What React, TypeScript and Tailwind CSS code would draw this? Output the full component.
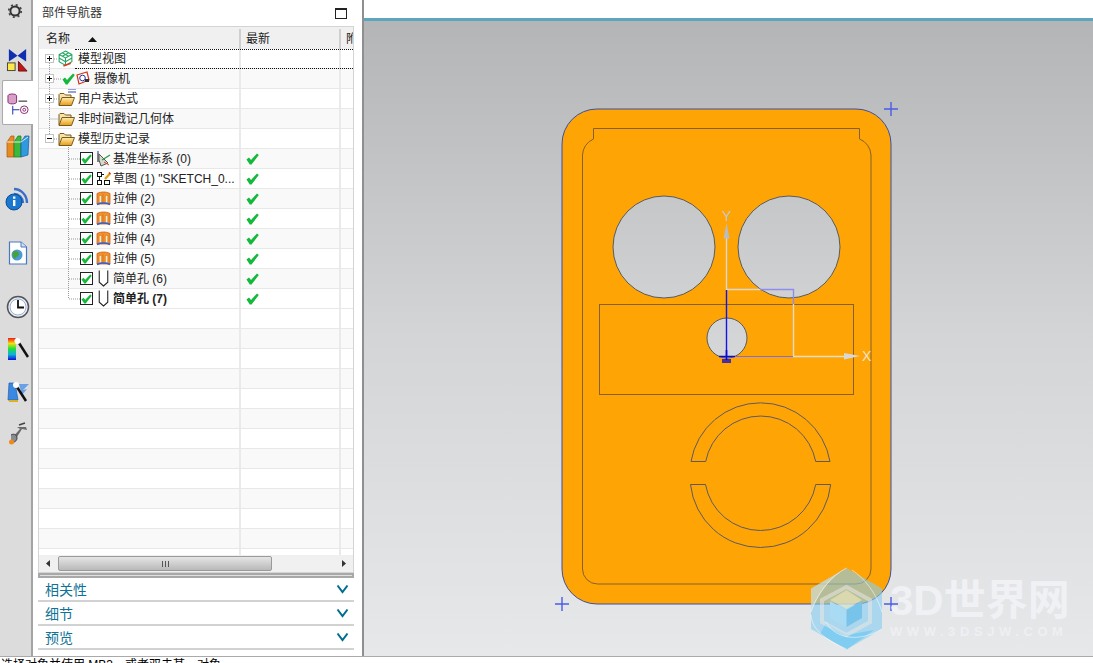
import React from "react";

const FONT = "font-['Liberation_Sans','Noto_Sans_CJK_SC',sans-serif]";

function Check({ className = "" }: { className?: string }) {
  return (
    <svg width="13" height="12" viewBox="0 0 13 12" className={className}>
      <path d="M0.5 6.5L3 4.5L5 7L11 0.5L12.8 2L5.5 11.5H3.8Z" fill="#14b83a" />
    </svg>
  );
}

function BoxCheck() {
  return (
    <svg width="11" height="10" viewBox="0 0 13 12">
      <path d="M0.5 6.5L3 4.5L5 7L11 0.5L12.8 2L5.5 11.5H3.8Z" fill="#14b83a" />
    </svg>
  );
}

function CheckBox() {
  return (
    <span className="relative flex h-[13px] w-[13px] shrink-0 items-center justify-center border border-[#222] bg-white">
      <BoxCheck />
    </span>
  );
}

function PlusBox({ minus = false }: { minus?: boolean }) {
  return (
    <span className="relative z-10 flex h-[9px] w-[9px] shrink-0 items-center justify-center border border-[#c4c4c4] bg-white">
      <svg width="7" height="7" viewBox="0 0 7 7">
        <path d={minus ? "M1 3.5H6" : "M1 3.5H6M3.5 1V6"} stroke="#111" strokeWidth="1" />
      </svg>
    </span>
  );
}

function Folder() {
  return (
    <svg width="18" height="16" viewBox="0 0 18 16" className="shrink-0">
      <defs>
        <linearGradient id="fo" x1="0" y1="0" x2="0" y2="1">
          <stop offset="0" stopColor="#ffeeb0" />
          <stop offset="1" stopColor="#e89a10" />
        </linearGradient>
      </defs>
      <path d="M1 14V3.5L2 2.5H6L7.5 4H13V6.5" fill="#f6e3a8" stroke="#7a5a20" strokeWidth="1" />
      <path d="M1 14.5L4 6.5H16.5L13.5 14.5Z" fill="url(#fo)" stroke="#7a5a20" strokeWidth="1" />
    </svg>
  );
}

function ExpressionFolder() {
  return (
    <span className="relative flex shrink-0">
      <Folder />
      <svg width="8" height="6" viewBox="0 0 8 6" className="absolute right-[0px] top-[-3px]">
        <path d="M0 1H8M0 4H8" stroke="#3340b0" strokeWidth="1" />
      </svg>
    </span>
  );
}

function ModelView() {
  return (
    <svg width="17" height="17" viewBox="0 0 16 16" className="shrink-0">
      <path d="M8 1L14 4.2V11L8 14.5L2 11V4.2Z M2 4.2L8 7.5L14 4.2 M8 7.5V14.5 M5 2.6L11 5.8 M11 2.6L5 5.8 M2 7.6L8 11 M14 7.6L8 11" fill="none" stroke="#23a662" strokeWidth="1" />
      <path d="M6 15L13 12.5" stroke="#e83a1a" strokeWidth="1.4" />
    </svg>
  );
}

function Camera() {
  return (
    <svg width="15" height="15" viewBox="0 0 15 15" className="shrink-0">
      <path d="M1 4L11 1L13 9L3 13Z" fill="#fff" stroke="#d8301c" strokeWidth="1.2" />
      <circle cx="6.5" cy="7" r="2.8" fill="none" stroke="#2030a0" strokeWidth="1" />
      <path d="M9 8H13V11H9Z" fill="#333" />
    </svg>
  );
}

function Csys() {
  return (
    <svg width="16" height="16" viewBox="0 0 16 16" className="shrink-0">
      <path d="M2 2V11" stroke="#333" strokeWidth="1.2" />
      <path d="M1 1H3" stroke="#2030c0" strokeWidth="1.2" />
      <path d="M3 3L12 12L5 15L3 9Z" fill="#d8d8d0" stroke="#555" strokeWidth="1" />
      <path d="M6 9L14 4" stroke="#2a9a3a" strokeWidth="1.2" />
      <path d="M8 11L13 14" stroke="#c84a30" strokeWidth="1" />
    </svg>
  );
}

function Sketch() {
  return (
    <svg width="15" height="15" viewBox="0 0 15 15" className="shrink-0">
      <rect x="1.5" y="1.5" width="4" height="4" fill="#fff" stroke="#111" />
      <rect x="1.5" y="9.5" width="4" height="4" fill="#fff" stroke="#111" />
      <rect x="8.5" y="9.5" width="5" height="4" fill="#fff" stroke="#111" />
      <path d="M5.5 3.5H8M3.5 5.5V9.5" stroke="#111" />
      <path d="M9 8L14 2.5" stroke="#e0a010" strokeWidth="2.2" />
      <path d="M13 1.5L14.5 3" stroke="#d03020" strokeWidth="1.5" />
    </svg>
  );
}

function Extrude() {
  return (
    <svg width="15" height="15" viewBox="0 0 15 15" className="shrink-0">
      <path d="M1 2.5C5 0.5 10 0.5 14 2.5V13H1Z" fill="#f2902a" stroke="#d0601a" strokeWidth="0.8" />
      <path d="M3.2 4.5H5.6V12H3.2ZM9.4 4.5H11.8V12H9.4Z" fill="#ffeec4" stroke="#c8661a" strokeWidth="0.5" />
      <path d="M7 3V12" stroke="#d97a20" strokeWidth="1" />
      <path d="M1 13.5C5 11.8 10 11.8 14 13.5" fill="none" stroke="#2f60d8" strokeWidth="1.5" />
    </svg>
  );
}

function Hole() {
  return (
    <svg width="13" height="17" viewBox="0 0 12 16" className="shrink-0">
      <path d="M2 0.5V11.5L6 15L10 11.5V0.5" fill="#fff" stroke="#222" strokeWidth="1" />
    </svg>
  );
}

function Row({ alt, children, check }: { alt: boolean; children?: React.ReactNode; check?: boolean }) {
  return (
    <div className={`flex h-5 shrink-0 border-b border-[#e8e8e8] ${alt ? "bg-[#f9f9f9]" : "bg-white"}`}>
      <div className="flex w-[200px] shrink-0 items-center overflow-hidden whitespace-nowrap">{children}</div>
      <div className="flex w-[100px] shrink-0 items-center border-l-2 border-[#eaeaea] pl-[5px]">
        {check ? <Check /> : null}
      </div>
      <div className="flex-1 border-l-2 border-[#eaeaea]" />
    </div>
  );
}

const children = [
  { icon: <Csys />, label: "基准坐标系 (0)" },
  { icon: <Sketch />, label: '草图 (1) "SKETCH_0...' },
  { icon: <Extrude />, label: "拉伸 (2)" },
  { icon: <Extrude />, label: "拉伸 (3)" },
  { icon: <Extrude />, label: "拉伸 (4)" },
  { icon: <Extrude />, label: "拉伸 (5)" },
  { icon: <Hole />, label: "简单孔 (6)" },
  { icon: <Hole />, label: "简单孔 (7)", bold: true },
];

function TreeLines() {
  const dot = { stroke: "#999", strokeWidth: 1, strokeDasharray: "1 1" };
  return (
    <svg width="120" height="270" viewBox="0 0 120 270" className="pointer-events-none absolute left-0 top-0 z-[5]">
      <path d="M10.5 10V90" {...dot} />
      <path d="M15 10H19M15 30H23M15 50H20M10.5 70H20M15 90H20" {...dot} />
      <path d="M29.5 98V250" {...dot} />
      <path d="M30 110H41M30 130H41M30 150H41M30 170H41M30 190H41M30 210H41M30 230H41M30 250H41" {...dot} />
    </svg>
  );
}

function Chevron() {
  return (
    <svg width="13" height="10" viewBox="0 0 13 10">
      <path d="M1.5 1.5L6.5 8L11.5 1.5" fill="none" stroke="#006c8f" strokeWidth="2" />
    </svg>
  );
}

function Section({ label }: { label: string }) {
  return (
    <div className="flex h-[24px] items-center justify-between border-b-2 border-[#d2d2d2] pl-[7px] pr-[5px]">
      <span className="mt-[2px] text-[14px] leading-none text-[#0f7396]">{label}</span>
      <span className="mb-[1px]"><Chevron /></span>
    </div>
  );
}

function Toolbar() {
  return (
    <div className="flex w-[33px] shrink-0 flex-col items-start border-r-2 border-[#a4a4a4] bg-[#dcdcdc]">
      <div className="flex h-[22px] w-[30px] items-center justify-center">
        <svg width="16" height="16" viewBox="0 0 16 16">
          <circle cx="8" cy="8" r="4.6" fill="none" stroke="#333" strokeWidth="2" />
          <circle cx="8" cy="8" r="6.2" fill="none" stroke="#444" strokeWidth="1.8" strokeDasharray="2 2.87" />
        </svg>
      </div>
      <div className="flex h-[58px] w-[35px] items-center justify-center pt-[19px]">
        <svg width="23" height="25" viewBox="0 0 24 26">
          <path d="M3 1L12 8L21 1V14L12 8L3 14Z" fill="#0f2fb0" />
          <rect x="1.5" y="15.5" width="8" height="8" fill="#ffe84a" stroke="#443" />
          <path d="M13 14V24H22Z" fill="#c81414" stroke="#611" />
        </svg>
      </div>
      <div className="ml-[2px] mr-[-2px] flex h-[45px] w-[31px] items-center justify-center rounded-l-[2px] border-y border-l border-[#aaa] bg-white pt-[2px]">
        <svg width="23" height="24" viewBox="0 0 24 24">
          <ellipse cx="5.5" cy="3.5" rx="4.5" ry="2" fill="#d8a0c8" stroke="#8a2a70" />
          <path d="M1 3.5V10C1 12.5 10 12.5 10 10V3.5" fill="#d8a0c8" stroke="#8a2a70" />
          <path d="M12 9H21" stroke="#111" />
          <path d="M6 14V23M6 18H13" stroke="#1a2ab0" />
          <circle cx="18" cy="18" r="4" fill="none" stroke="#8a2a70" />
          <circle cx="18" cy="18" r="1.5" fill="none" stroke="#8a2a70" />
        </svg>
      </div>
      <div className="flex h-[42px] w-[35px] items-center justify-center">
        <svg width="24" height="24" viewBox="0 0 24 24">
          <path d="M1 8L5 2H8V23H1Z" fill="#e88a20" stroke="#a05a10" strokeWidth="0.7" />
          <path d="M8 8L12 2H15V23H8Z" fill="#3cb83c" stroke="#1a7a1a" strokeWidth="0.7" />
          <path d="M15 8L19 2H23L22 21L15 23Z" fill="#2f9ae0" stroke="#1a5a9a" strokeWidth="0.7" />
          <path d="M1 8H8M8 8H15M15 8L22 3" stroke="#fff" strokeWidth="0.8" />
        </svg>
      </div>
      <div className="flex h-[62px] w-[35px] items-center justify-center">
        <svg width="25" height="25" viewBox="0 0 25 25">
          <path d="M9 3C16 3 22 9 22 17M9 8C14 8 18 12 18 17" fill="none" stroke="#3a70c8" strokeWidth="2.4" />
          <circle cx="9" cy="16" r="8" fill="#1a78d0" stroke="#0d4a90" />
          <rect x="8" y="14" width="2.4" height="6" fill="#fff" />
          <rect x="8" y="10.5" width="2.4" height="2.2" fill="#fff" />
        </svg>
      </div>
      <div className="flex h-[46px] w-[35px] items-center justify-center pt-[2px]">
        <svg width="20" height="24" viewBox="0 0 20 24">
          <path d="M1.5 1H13L18.5 6V23H1.5Z" fill="#fff" stroke="#4a78c0" strokeWidth="1.2" />
          <path d="M13 1V6H18.5" fill="#cfe0f5" stroke="#4a78c0" />
          <circle cx="9" cy="14" r="5.5" fill="#4a9ad8" />
          <path d="M5 11C7 9 11 10 11 13C11 16 8 15 7 18C5 17 4 14 5 11Z" fill="#48a038" />
        </svg>
      </div>
      <div className="flex h-[60px] w-[35px] items-center justify-center pt-[3px]">
        <svg width="24" height="24" viewBox="0 0 24 24">
          <circle cx="12" cy="12" r="10.5" fill="#e8eef8" stroke="#555" strokeWidth="1.5" />
          <circle cx="12" cy="12" r="8" fill="#fff" stroke="#99b0d8" />
          <path d="M12 5V12.5H18" fill="none" stroke="#111" strokeWidth="1.8" />
        </svg>
      </div>
      <div className="flex h-[27px] w-[31px] items-center justify-center pl-[5px]">
        <svg width="21" height="24" viewBox="0 0 21 24">
          <defs>
            <linearGradient id="rb" x1="0" y1="0" x2="0" y2="1">
              <stop offset="0" stopColor="#f01818" />
              <stop offset="0.25" stopColor="#f0e010" />
              <stop offset="0.5" stopColor="#18e040" />
              <stop offset="0.75" stopColor="#10b0e0" />
              <stop offset="1" stopColor="#1010d0" />
            </linearGradient>
          </defs>
          <rect x="0" y="1" width="8" height="22" fill="url(#rb)" />
          <path d="M11 6L20 20" stroke="#111" strokeWidth="2.5" />
          <circle cx="9.5" cy="4" r="3" fill="#fff" />
        </svg>
      </div>
      <div className="flex h-[59px] w-[31px] items-center justify-center pl-[5px]">
        <svg width="24" height="24" viewBox="0 0 24 24">
          <path d="M3 3H9L12 20H2Z" fill="#3a88e0" stroke="#2060b0" strokeWidth="0.7" />
          <path d="M13 4H23L17 10L21 9L16 15Z" fill="#6aa0e8" />
          <path d="M3 21H12" stroke="#e0b020" strokeWidth="2" />
          <path d="M11 7L20 21" stroke="#111" strokeWidth="2.5" />
          <circle cx="10" cy="5" r="3" fill="#fff" />
        </svg>
      </div>
      <div className="flex h-[24px] w-[31px] items-center justify-center pl-[4px]">
        <svg width="20" height="23" viewBox="0 0 20 23">
          <path d="M9 5H18L19 8L14 7L7 18L4 16L12 7Z" fill="#6a6a6a" />
          <path d="M3 13C6 11 9 13 9 16C9 19 6 21 3 20" fill="#8a8a92" stroke="#444" />
          <circle cx="3.5" cy="20" r="2.5" fill="#f08a18" />
          <path d="M11 3L17 1" stroke="#444" strokeWidth="1.5" />
        </svg>
      </div>
    </div>
  );
}

function Navigator() {
  return (
    <div className="flex w-[331px] shrink-0 flex-col border-r-2 border-[#8f8f8f] bg-white pl-[5px] pr-[8px]">
      <div className="flex h-[26px] shrink-0 items-center justify-between pl-[4px] pr-[7px]">
        <span className="text-[12px] leading-none text-[#333]">部件导航器</span>
        <span className="block h-[11px] w-[12px] border border-t-2 border-[#222]" />
      </div>
      <div className="flex h-[547px] shrink-0 flex-col overflow-hidden border border-[#d4d4d4]">
        <div className="flex h-[22px] shrink-0 bg-[#f0f0f0] pt-[2px] text-[12px] text-[#222]">
          <div className="flex w-[200px] shrink-0 items-center pl-[7px]">
            <span>名称</span>
            <svg width="9" height="5" viewBox="0 0 9 5" className="ml-[18px]"><path d="M0 5L4.5 0L9 5Z" fill="#111" /></svg>
          </div>
          <div className="flex w-[100px] shrink-0 items-center border-l-2 border-[#cfcfcf] pl-[5px]">最新</div>
          <div className="flex flex-1 items-center overflow-hidden whitespace-nowrap border-l-2 border-[#cfcfcf] pl-[5px]">附</div>
        </div>
        <div className="relative h-[506px] shrink-0 overflow-hidden text-[12px] text-[#222]">
          <TreeLines />
          <Row alt={false}>
            <span className="ml-[6px]"><PlusBox /></span>
            <span className="ml-[3px]"><ModelView /></span>
            <span className="relative z-10 ml-[4px]">模型视图</span>
          </Row>
          <Row alt>
            <span className="ml-[6px]"><PlusBox /></span>
            <span className="ml-[8px]"><Check /></span>
            <span className="ml-[1px]"><Camera /></span>
            <span className="ml-[3px]">摄像机</span>
          </Row>
          <Row alt={false}>
            <span className="ml-[6px]"><PlusBox /></span>
            <span className="ml-[4px]"><ExpressionFolder /></span>
            <span className="ml-[2px]">用户表达式</span>
          </Row>
          <Row alt>
            <span className="ml-[19px]"><Folder /></span>
            <span className="ml-[2px]">非时间戳记几何体</span>
          </Row>
          <Row alt={false}>
            <span className="ml-[6px]"><PlusBox minus /></span>
            <span className="ml-[4px]"><Folder /></span>
            <span className="ml-[2px]">模型历史记录</span>
          </Row>
          {children.map((c, i) => (
            <Row key={i} alt={i % 2 === 0} check>
              <span className="ml-[41px]"><CheckBox /></span>
              <span className="ml-[2px] flex w-[17px] justify-center">{c.icon}</span>
              <span className={`ml-[1px] ${c.bold ? "font-bold" : ""}`}>{c.label}</span>
            </Row>
          ))}
          {Array.from({ length: 13 }).map((_, i) => (
            <Row key={i} alt={i % 2 === 1} />
          ))}
          <div className="pointer-events-none absolute left-[36px] right-0 top-0 h-[20px] border-y border-dotted border-[#111]" />
        </div>
        <div className="flex h-[17px] shrink-0 items-center bg-[#f0f0f0]">
          <svg width="19" height="15" viewBox="0 0 19 15" className="shrink-0"><path d="M11 4V11L7 7.5Z" fill="#333" /></svg>
          <div className="flex h-[15px] w-[214px] items-center justify-center rounded-[2px] border border-[#9a9a9a] bg-gradient-to-b from-[#e6e6e6] to-[#b9b9b9]">
            <span className="h-[6px] w-[7px] border-x border-[#555] bg-[linear-gradient(90deg,transparent_40%,#555_40%,#555_60%,transparent_60%)]" />
          </div>
          <div className="flex-1" />
          <svg width="19" height="15" viewBox="0 0 19 15" className="shrink-0"><path d="M8 4V11L12 7.5Z" fill="#333" /></svg>
        </div>
      </div>
      <div className="h-[5px] shrink-0 border-2 border-[#a8a8a8] bg-[#e0e0e0]" />
      <Section label="相关性" />
      <Section label="细节" />
      <Section label="预览" />
    </div>
  );
}

function Model() {
  const outer = "M597 109H856A35 35 0 0 1 891 144V569A35 35 0 0 1 856 604H597A35 35 0 0 1 562 569V144A35 35 0 0 1 597 109Z";
  const circles =
    "M613 247a51 51 0 1 0 102 0a51 51 0 1 0 -102 0Z M738 247a51 51 0 1 0 102 0a51 51 0 1 0 -102 0Z M707 338a20 20 0 1 0 40 0a20 20 0 1 0 -40 0Z";
  return (
    <svg viewBox="364 21 729 635" className="block h-full w-full">
      <path d={outer + " " + circles} fillRule="evenodd" fill="#ffa405" />
      <path d={outer} fill="none" stroke="#3d4fa0" strokeWidth="1" />
      <path d={circles} fill="none" stroke="#5a5a5a" strokeWidth="1" />
      <path
        d="M593.5 128.5H859.5V139A18 18 0 0 1 871 155V569A15 15 0 0 1 856 584H597.5A15 15 0 0 1 582.5 569V155A18 18 0 0 1 593.5 139Z"
        fill="none"
        stroke="#85602a"
        strokeWidth="1"
      />
      <rect x="599.5" y="304.5" width="254" height="90" fill="none" stroke="#85602a" strokeWidth="1" />
      <path
        d="M691 461.5A70.5 70.5 0 0 1 830 461.5H815.7A56 56 0 0 0 705.7 461.5Z M690.5 484.5H705.5A56 56 0 0 0 815.7 484.5H830.7A70.5 70.5 0 0 1 690.5 484.5Z"
        fill="none"
        stroke="#5c5a60"
        strokeWidth="1"
      />
      <path d="M726.5 238V289.5H760" fill="none" stroke="#dcd8cc" strokeWidth="1.4" />
      <path d="M760 289.5H793.5V304" fill="none" stroke="#8f8cf0" strokeWidth="1.4" />
      <path d="M793.5 304V356.5H846" fill="none" stroke="#e6ddc8" strokeWidth="1.4" />
      <path d="M735 356.5H793" stroke="#7f6ce8" strokeWidth="1.2" />
      <path d="M726.5 290V357" stroke="#1414e8" strokeWidth="1.4" />
      <path d="M726.5 223L723.5 238.5H729.5Z" fill="#bcbcc0" />
      <path d="M860 356L844 353V359.5Z" fill="#d8d8d8" />
      <path d="M719 356.5H735M722 360H731M722 362H731M726.5 350V360" stroke="#0808d8" strokeWidth="1.6" />
      <text x="722" y="221" fontSize="14" fill="#c6c8cc" fontFamily="Liberation Sans">Y</text>
      <text x="862" y="361" fontSize="14" fill="#ece2cc" fontFamily="Liberation Sans">X</text>
      <path d="M884 109H898M891 102V116M555 604H569M562 597V611M884 604H898M891 597V611" stroke="#4a5ce6" strokeWidth="1.4" />
      <g>
        <path d="M846.5 568L882 588.5V629L846.5 649.5L811 629V588.5Z" fill="#86cdf2" fillOpacity="0.62" />
        <path d="M846.5 568L811 588.5V612C820 590 832 576 846.5 568Z" fill="#f0e8d8" fillOpacity="0.45" />
        <path d="M826 623L846.5 635L874 630L846.5 649.5L820 634Z" fill="#6fc8f2" fillOpacity="0.7" />
        <path d="M846.5 587L870 600V622L846.5 635L822 622V600Z" fill="none" stroke="#e9e8e4" strokeOpacity="0.55" strokeWidth="4" />
        <path d="M846.5 590L862 600L846.5 609L830 600Z" fill="#f4eac0" fillOpacity="0.6" />
        <path d="M830 601L846 610V627L830 618Z" fill="#a9dbf5" />
        <path d="M862 601L846.5 610V627L862 618Z" fill="#78c3ea" />
        <path d="M811 612C816 596 830 576 846.5 568M882 612C876 592 864 578 852 570M826 622C836 640 860 642 882 629M811 615C812 630 826 640 846.5 649" fill="none" stroke="#ffffff" strokeOpacity="0.65" strokeWidth="0.8" />
      </g>
    </svg>
  );
}

function Viewport() {
  return (
    <div className="flex flex-1 flex-col bg-white">
      <div className="h-[18px] shrink-0 bg-white" />
      <div className="h-[3px] shrink-0 bg-[#5da4bd]" />
      <div className="relative flex-1 overflow-hidden bg-[linear-gradient(180deg,#b4b5b6_0%,#d4d5d7_50%,#e7e8ea_100%)]">
        <Model />
        <div className="pointer-events-none absolute left-[526px] top-[555px] flex flex-col items-start">
          <span className="text-[42px] font-bold leading-[50px] text-[#f2f3f6]/90">3D世界网</span>
          <span className="mt-[-1px] text-[13px] font-bold leading-[13px] tracking-[4.6px] text-[#f0f1f4]/90">WWW.3DSJW.COM</span>
        </div>
      </div>
    </div>
  );
}

export default function App() {
  return (
    <div className={`flex h-[663px] w-[1093px] flex-col overflow-hidden bg-white ${FONT}`}>
      <div className="flex h-[656px] shrink-0">
        <Toolbar />
        <Navigator />
        <Viewport />
      </div>
      <div className="h-[7px] shrink-0 overflow-hidden border-t border-[#aaaaaa] bg-white pl-[1px] pt-[1px] text-[12px] leading-[14px] text-black">
        选择对象并使用 MB3，或者双击某一对象
      </div>
    </div>
  );
}
